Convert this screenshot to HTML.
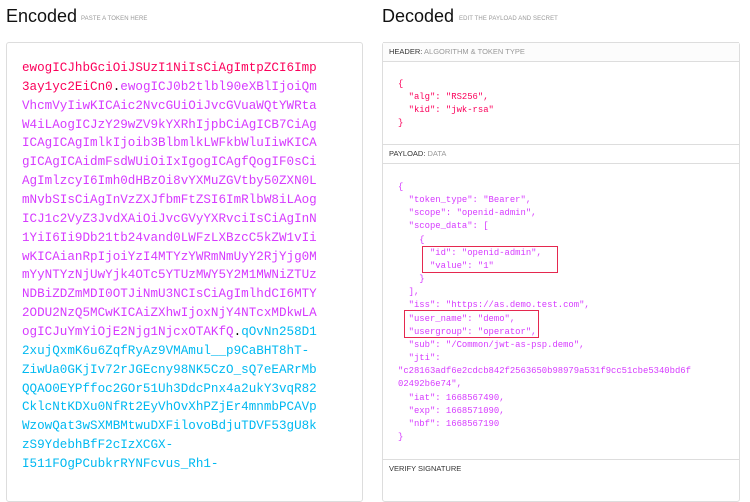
<!DOCTYPE html>
<html><head><meta charset="utf-8"><style>
*{margin:0;padding:0;box-sizing:border-box}
body{width:750px;height:481px;overflow:hidden;background:#fff;font-family:"Liberation Sans",sans-serif;position:relative}
.t{position:absolute;top:6px;font-size:18px;color:#111}
.s{position:absolute;top:16px;font-size:6px;color:#999;letter-spacing:0.1px}
.box{position:absolute;border:1px solid #ddd;border-radius:3px}
.enc{left:6px;top:42px;width:357px;height:460px}
.enc pre{position:absolute;left:15px;top:16px;font-family:"Liberation Mono",monospace;font-size:12.6px;line-height:18.86px;color:#d63aff}
.r{color:#fb015b}.c{color:#00b9f1}.k{color:#000}
.dec{left:382px;top:42px;width:358px;height:460px}
.bar{position:absolute;left:0;right:0;height:20px;border-bottom:1px solid #ddd;border-top:1px solid #ddd;font-size:7.5px;color:#333;padding-left:6px;line-height:18px;background:#fff}
.bar span{color:#999}
.json{position:absolute;left:15px;font-family:"Liberation Mono",monospace;font-size:8.9px;line-height:13.15px;white-space:pre}
.rb{position:absolute;border:1.5px solid #e5284f}
</style></head><body>
<div class="t" style="left:6px">Encoded</div>
<div class="s" style="left:81px">PASTE A TOKEN HERE</div>
<div class="t" style="left:382px">Decoded</div>
<div class="s" style="left:459px">EDIT THE PAYLOAD AND SECRET</div>
<div class="box enc"><pre><span class="r">ewogICJhbGciOiJSUzI1NiIsCiAgImtpZCI6Imp
3ay1yc2EiCn0</span><span class="k">.</span>ewogICJ0b2tlbl90eXBlIjoiQm
VhcmVyIiwKICAic2NvcGUiOiJvcGVuaWQtYWRta
W4iLAogICJzY29wZV9kYXRhIjpbCiAgICB7CiAg
ICAgICAgImlkIjoib3BlbmlkLWFkbWluIiwKICA
gICAgICAidmFsdWUiOiIxIgogICAgfQogIF0sCi
AgImlzcyI6Imh0dHBzOi8vYXMuZGVtby50ZXN0L
mNvbSIsCiAgInVzZXJfbmFtZSI6ImRlbW8iLAog
ICJ1c2VyZ3JvdXAiOiJvcGVyYXRvciIsCiAgInN
1YiI6Ii9Db21tb24vand0LWFzLXBzcC5kZW1vIi
wKICAianRpIjoiYzI4MTYzYWRmNmUyY2RjYjg0M
mYyNTYzNjUwYjk4OTc5YTUzMWY5Y2M1MWNiZTUz
NDBiZDZmMDI0OTJiNmU3NCIsCiAgImlhdCI6MTY
2ODU2NzQ5MCwKICAiZXhwIjoxNjY4NTcxMDkwLA
ogICJuYmYiOjE2Njg1NjcxOTAKfQ<span class="k">.</span><span class="c">qOvNn258D1
2xujQxmK6u6ZqfRyAz9VMAmul__p9CaBHT8hT-
ZiwUa0GKjIv72rJGEcny98NK5CzO_sQ7eEARrMb
QQAO0EYPffoc2GOr51Uh3DdcPnx4a2ukY3vqR82
CklcNtKDXu0NfRt2EyVhOvXhPZjEr4mnmbPCAVp
WzowQat3wSXMBMtwuDXFilovoBdjuTDVF53gU8k
zS9YdebhBfF2cIzXCGX-
I511FOgPCubkrRYNFcvus_Rh1-</span></pre></div>
<div class="box dec">
<div class="bar" style="top:-1px;background:#fcfcfc">HEADER: <span>ALGORITHM &amp; TOKEN TYPE</span></div>
<div class="json" style="top:35px;color:#fb015b">{
  "alg": "RS256",
  "kid": "jwk-rsa"
}</div>
<div class="bar" style="top:101px">PAYLOAD: <span>DATA</span></div>
<div class="json" style="top:138px;color:#d63aff">{
  "token_type": "Bearer",
  "scope": "openid-admin",
  "scope_data": [
    {
      "id": "openid-admin",
      "value": "1"
    }
  ],
  "iss": "https://as.demo.test.com",
  "user_name": "demo",
  "usergroup": "operator",
  "sub": "/Common/jwt-as-psp.demo",
  "jti":
"c28163adf6e2cdcb842f2563650b98979a531f9cc51cbe5340bd6f
02492b6e74",
  "iat": 1668567490,
  "exp": 1668571090,
  "nbf": 1668567190
}</div>
<div class="bar" style="top:416px;border-bottom:none">VERIFY SIGNATURE</div>
</div>
<div class="rb" style="left:422px;top:246px;width:136px;height:27px"></div>
<div class="rb" style="left:404px;top:310px;width:135px;height:28px"></div>
</body></html>
